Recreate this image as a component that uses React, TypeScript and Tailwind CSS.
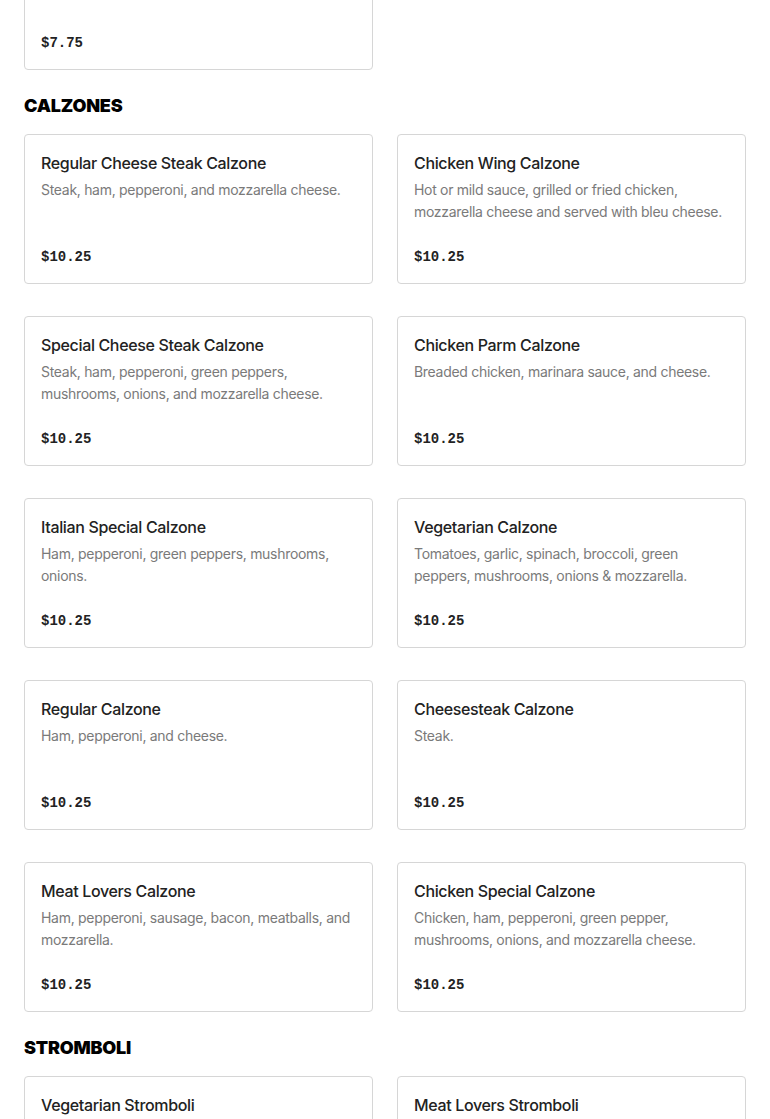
import React from 'react';

type Item = { name: string; desc: string; price: string };

const calzones: Item[] = [
  { name: 'Regular Cheese Steak Calzone', desc: 'Steak, ham, pepperoni, and mozzarella cheese.', price: '$10.25' },
  { name: 'Chicken Wing Calzone', desc: 'Hot or mild sauce, grilled or fried chicken, mozzarella cheese and served with bleu cheese.', price: '$10.25' },
  { name: 'Special Cheese Steak Calzone', desc: 'Steak, ham, pepperoni, green peppers, mushrooms, onions, and mozzarella cheese.', price: '$10.25' },
  { name: 'Chicken Parm Calzone', desc: 'Breaded chicken, marinara sauce, and cheese.', price: '$10.25' },
  { name: 'Italian Special Calzone', desc: 'Ham, pepperoni, green peppers, mushrooms, onions.', price: '$10.25' },
  { name: 'Vegetarian Calzone', desc: 'Tomatoes, garlic, spinach, broccoli, green peppers, mushrooms, onions & mozzarella.', price: '$10.25' },
  { name: 'Regular Calzone', desc: 'Ham, pepperoni, and cheese.', price: '$10.25' },
  { name: 'Cheesesteak Calzone', desc: 'Steak.', price: '$10.25' },
  { name: 'Meat Lovers Calzone', desc: 'Ham, pepperoni, sausage, bacon, meatballs, and mozzarella.', price: '$10.25' },
  { name: 'Chicken Special Calzone', desc: 'Chicken, ham, pepperoni, green pepper, mushrooms, onions, and mozzarella cheese.', price: '$10.25' },
];

const stromboli: Item[] = [
  { name: 'Vegetarian Stromboli', desc: '', price: '' },
  { name: 'Meat Lovers Stromboli', desc: '', price: '' },
];

const Card = ({ item }: { item: Item }) => (
  <div className="flex h-[150px] flex-col rounded-[4px] border border-[#d6d6d6] bg-white px-4 pt-4 pb-4">
    <h3 className="text-[16px] leading-6 font-medium tracking-[-0.35px] text-[#222]">{item.name}</h3>
    {item.desc && (
      <p className="mt-1 text-[14px] leading-[22px] tracking-[-0.3px] text-[#7a7a7a]">{item.desc}</p>
    )}
    {item.price && (
      <p className="mt-auto font-['Liberation_Mono',monospace] text-[14px] leading-5 font-bold text-[#222]">
        {item.price}
      </p>
    )}
  </div>
);

const Section = ({ title, items }: { title: string; items: Item[] }) => (
  <section>
    <h2 className="pt-[22px] pb-[14px] text-[18px] leading-7 font-black tracking-[-0.2px] text-black">{title}</h2>
    <div className="grid grid-cols-2 gap-x-6 gap-y-8">
      {items.map((it) => (
        <Card key={it.name} item={it} />
      ))}
    </div>
  </section>
);

export default function App() {
  return (
    <div className="min-h-screen overflow-hidden bg-white font-['Inter',sans-serif]">
      <div className="px-6">
        <div className="-mt-[80px] grid grid-cols-2 gap-x-6">
          <div className="flex h-[150px] flex-col rounded-[4px] border border-[#d6d6d6] bg-white px-4 pt-4 pb-4">
            <p className="mt-auto font-['Liberation_Mono',monospace] text-[14px] leading-5 font-bold text-[#222]">$7.75</p>
          </div>
        </div>
        <Section title="CALZONES" items={calzones} />
        <Section title="STROMBOLI" items={stromboli} />
      </div>
    </div>
  );
}
